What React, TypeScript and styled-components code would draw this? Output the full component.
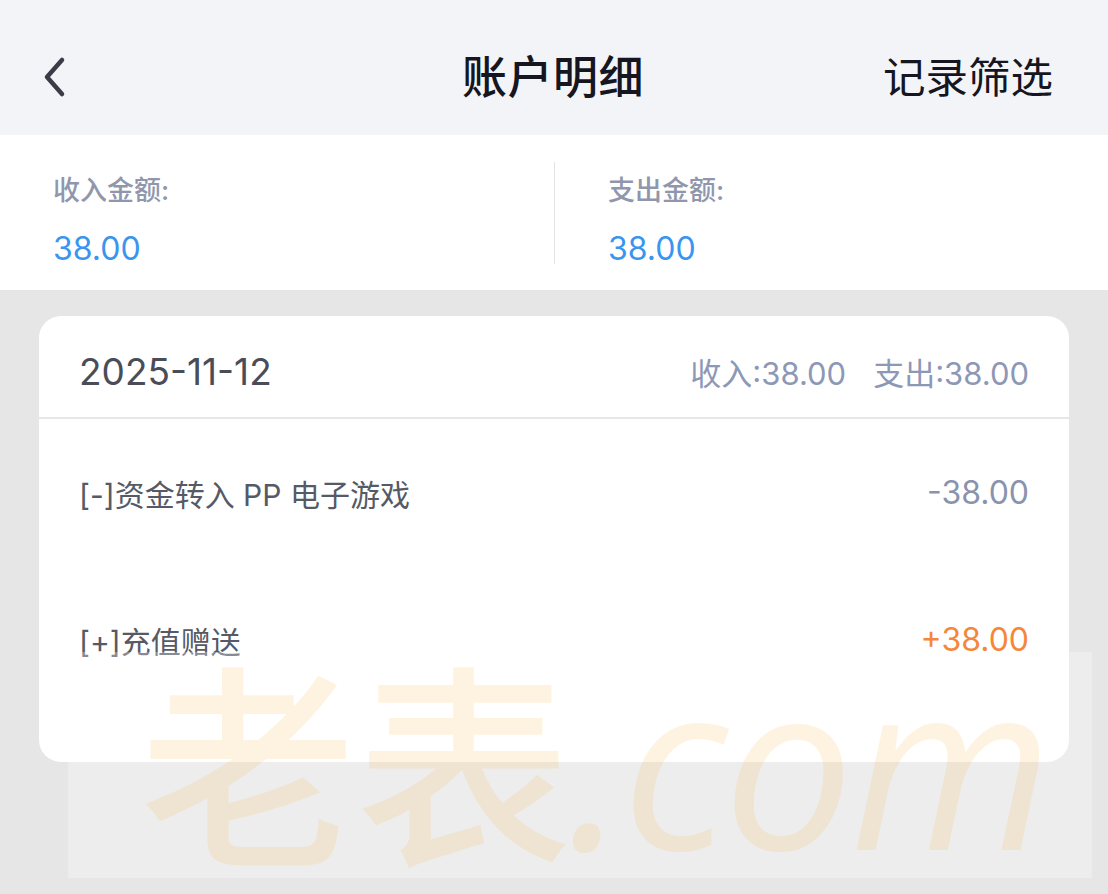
import React from 'react'
import styled, { createGlobalStyle } from 'styled-components'

const GlobalStyle = createGlobalStyle`
html, body {
  margin: 0;
  padding: 0;
  background: #e6e6e6;
  font-family: "Inter", "Noto Sans CJK SC", sans-serif;
}
`;

const Page = styled.div`
position: relative;
width: 1108px;
height: 894px;
overflow: hidden;
background: #e6e6e6;
`;

const NavBar = styled.div`
height: 135px;
background: #f3f4f8;
display: grid;
grid-template-columns: 1fr auto 1fr;
align-items: center;
padding: 14px 55px 0 53px;
box-sizing: border-box;
`;

const BackButton = styled.div`
display: flex;
align-items: center;
color: #3a3d48;
padding-top: 4px;
margin-left: -13px;
`;

const Title = styled.div`
font-size: 45px;
font-weight: 500;
color: #15161f;
letter-spacing: 0.5px;
`;

const FilterLink = styled.div`
justify-self: end;
font-size: 42.5px;
color: #15161f;
`;

const Summary = styled.div`
height: 155px;
background: #fff;
display: grid;
grid-template-columns: 1fr 1fr;
align-items: start;
padding-top: 27px;
box-sizing: border-box;
`;

type SummaryColProps = {
  divider?: boolean;
}

const SummaryCol = styled.div`
display: flex;
flex-direction: column;
gap: 25px;
padding: 14px 0 0 53px;
border-left: ${({ divider }: SummaryColProps) => (divider ? '1px solid #e4e4e4' : 'none')};
height: 102px;
box-sizing: border-box;
`;

const SummaryLabel = styled.div`
font-size: 27px;
font-weight: 500;
color: #9097ad;
line-height: 30px;
`;

const SummaryValue = styled.div`
font-size: 32px;
color: #3a95ef;
line-height: 36px;
`;

const Content = styled.div`
padding: 26px 39px 0;
`;

const Card = styled.div`
background: #fff;
border-radius: 22px;
height: 446px;
overflow: hidden;
`;

const CardHeader = styled.div`
height: 103px;
display: flex;
align-items: center;
justify-content: space-between;
padding: 10px 40px 0;
border-bottom: 2px solid #e6e6e8;
box-sizing: border-box;
`;

const DateText = styled.div`
font-size: 37px;
color: #4a4d58;
`;

const Totals = styled.div`
display: flex;
gap: 27px;
font-size: 31px;
color: #8d98b6;
`;

const Row = styled.div`
height: 147px;
display: flex;
align-items: center;
justify-content: space-between;
padding: 0 40px;
`;

const RowLabel = styled.div`
font-size: 30px;
color: #555a66;
`;

type AmountProps = {
  positive?: boolean;
}

const Amount = styled.div`
font-size: 32px;
color: ${({ positive }: AmountProps) => (positive ? '#f5873a' : '#8a93ad')};
`;

const WatermarkBand = styled.div`
position: absolute;
left: 68px;
top: 652px;
width: 1024px;
height: 226px;
background: rgba(255, 255, 255, 0.3);
pointer-events: none;
`;

const Watermark = styled.div`
position: absolute;
left: 140px;
top: 644px;
display: flex;
align-items: baseline;
color: rgba(248, 186, 80, 0.17);
pointer-events: none;
white-space: nowrap;
`;

const WatermarkHan = styled.span`
font-family: "Noto Sans CJK SC", sans-serif;
font-size: 216px;
font-weight: 500;
line-height: 1;
`;

const WatermarkLatin = styled.span`
font-family: "Open Sans", sans-serif;
font-style: italic;
font-size: 232px;
letter-spacing: -4px;
line-height: 1;
margin-left: -4px;
`;

const records = [
  { label: '[-]资金转入 PP 电子游戏', amount: '-38.00', positive: false },
  { label: '[+]充值赠送', amount: '+38.00', positive: true },
]

export default function App() {
  return (
    <Page>
      <GlobalStyle />
      <NavBar>
        <BackButton>
          <svg width="34" height="44" viewBox="0 0 34 44" fill="none">
            <path d="M22 5 L7 22 L22 39" stroke="currentColor" strokeWidth="4.5" strokeLinecap="round" strokeLinejoin="round" />
          </svg>
        </BackButton>
        <Title>账户明细</Title>
        <FilterLink>记录筛选</FilterLink>
      </NavBar>
      <Summary>
        <SummaryCol>
          <SummaryLabel>收入金额:</SummaryLabel>
          <SummaryValue>38.00</SummaryValue>
        </SummaryCol>
        <SummaryCol divider>
          <SummaryLabel>支出金额:</SummaryLabel>
          <SummaryValue>38.00</SummaryValue>
        </SummaryCol>
      </Summary>
      <Content>
        <Card>
          <CardHeader>
            <DateText>2025-11-12</DateText>
            <Totals>
              <span>收入:38.00</span>
              <span>支出:38.00</span>
            </Totals>
          </CardHeader>
          {records.map((r) => (
            <Row key={r.label}>
              <RowLabel>{r.label}</RowLabel>
              <Amount positive={r.positive}>{r.amount}</Amount>
            </Row>
          ))}
        </Card>
      </Content>
      <WatermarkBand />
      <Watermark>
        <WatermarkHan>老表</WatermarkHan>
        <WatermarkLatin>.com</WatermarkLatin>
      </Watermark>
    </Page>
  )
}
